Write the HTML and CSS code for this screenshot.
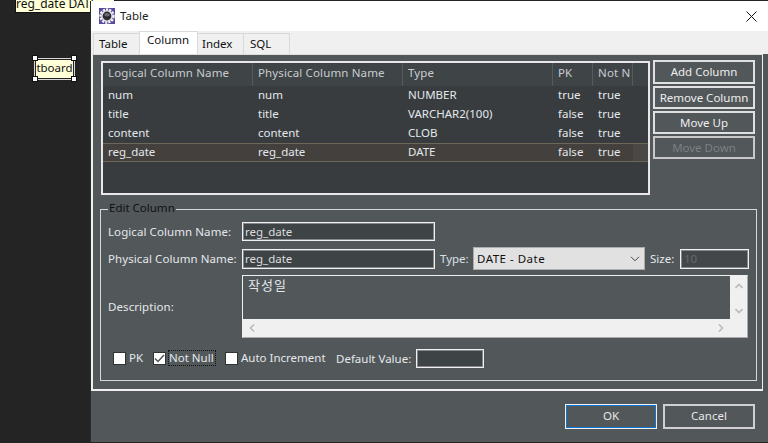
FILE: index.html
```html
<!DOCTYPE html>
<html lang="en">
<head>
<meta charset="utf-8">
<title>Table</title>
<link rel="stylesheet" href="styles.css">
</head>
<body>
<div class="desktop">
  <div class="node node-top">reg_date DATE</div>
  <div class="node node-sel">tboard
    <i class="h h1"></i><i class="h h2"></i><i class="h h3"></i><i class="h h4"></i>
  </div>
  <div class="dialog">
    <header class="titlebar">
      <svg class="appicon" width="16" height="16" viewBox="0 0 16 16">
        <rect width="16" height="16" fill="#5a4a9e"/>
        <circle cx="8" cy="8" r="6.5" fill="none" stroke="#f4f4f4" stroke-width="2.4" stroke-dasharray="2.200 1"/>
        <circle cx="8" cy="8" r="5.800" fill="#e6e6e8"/>
        <circle cx="8" cy="8" r="4.400" fill="#2a2a32"/>
        <ellipse cx="8" cy="6.800" rx="2.800" ry="1.800" fill="#6a6a74"/>
      </svg>
      <span class="title">Table</span>
      <svg class="close" width="11" height="11" viewBox="0 0 11 11"><path d="M.5.5l10 10M10.500.5l-10 10" stroke="#111" stroke-width="1" fill="none"/></svg>
    </header>
    <nav class="tabs">
      <span class="tab t1">Table</span>
      <span class="tab active">Column</span>
      <span class="tab t3">Index</span>
      <span class="tab t4">SQL</span>
    </nav>
    <main class="panel">
      <section class="top">
        <div class="table">
          <div class="row head">
            <span class="c c1">Logical Column Name</span><span class="c c2">Physical Column Name</span><span class="c c3">Type</span><span class="c c4">PK</span><span class="c c5">Not N</span>
          </div>
          <div class="row"><span class="c1">num</span><span class="c2">num</span><span class="c3">NUMBER</span><span class="c4">true</span><span class="c5">true</span></div>
          <div class="row"><span class="c1">title</span><span class="c2">title</span><span class="c3">VARCHAR2(100)</span><span class="c4">false</span><span class="c5">true</span></div>
          <div class="row"><span class="c1">content</span><span class="c2">content</span><span class="c3">CLOB</span><span class="c4">false</span><span class="c5">true</span></div>
          <div class="row sel"><span class="c1">reg_date</span><span class="c2">reg_date</span><span class="c3">DATE</span><span class="c4">false</span><span class="c5">true</span><span class="tail"></span></div>
        </div>
        <div class="btns">
          <button class="btn">Add Column</button>
          <button class="btn">Remove Column</button>
          <button class="btn">Move Up</button>
          <button class="btn off">Move Down</button>
        </div>
      </section>
      <fieldset class="edit">
        <legend>Edit Column</legend>
        <div class="line l1"><label class="lbl">Logical Column Name:</label><span class="inp w191">reg_date</span></div>
        <div class="line l2"><label class="lbl">Physical Column Name:</label><span class="inp w191">reg_date</span>
          <label class="lbl2">Type:</label>
          <span class="select">DATE - Date<svg width="10" height="6" viewBox="0 0 10 6"><path d="M1 .8l4 4 4-4" stroke="#444" fill="none"/></svg></span>
          <label class="lbl3">Size:</label><span class="inp size">10</span>
        </div>
        <div class="line l3"><label class="lbl desc">Description:</label>
          <div class="area">
            <div class="area-main">
              <div class="area-text">작성일</div>
              <div class="vbar">
                <svg width="8" height="6" viewBox="0 0 8 6"><path d="M.5 5l3.500-3.500L7.500 5" stroke="#bbb" stroke-width="1.600" fill="none"/></svg>
                <svg width="8" height="6" viewBox="0 0 8 6"><path d="M.5 1l3.500 3.500L7.500 1" stroke="#bbb" stroke-width="1.600" fill="none"/></svg>
              </div>
            </div>
            <div class="hbar">
              <svg width="6" height="8" viewBox="0 0 6 8"><path d="M5 .5L1.500 4 5 7.500" stroke="#bbb" stroke-width="1.600" fill="none"/></svg>
              <svg width="6" height="8" viewBox="0 0 6 8"><path d="M1 .5L4.500 4 1 7.500" stroke="#bbb" stroke-width="1.600" fill="none"/></svg>
            </div>
          </div>
        </div>
        <div class="line l4">
          <span class="chk"></span><span class="cl pk">PK</span>
          <span class="chk c2b on"><svg width="11" height="9" viewBox="0 0 11 9"><path d="M1 4.500l3 3L10 1" stroke="#555" stroke-width="1.500" fill="none"/></svg></span><span class="cl nn">Not Null</span>
          <span class="chk c2b"></span><span class="cl ai">Auto Increment</span>
          <span class="cl dv">Default Value:</span><span class="inp dflt"></span>
        </div>
      </fieldset>
    </main>
    <footer class="foot">
      <button class="fbtn ok">OK</button>
      <button class="fbtn cancel">Cancel</button>
    </footer>
  </div>
</div>
</body>
</html>
```
FILE: styles.css
```css
* { box-sizing: border-box; }
html, body { margin: 0; padding: 0; }
body { width: 768px; height: 443px; overflow: hidden; background: #242424; font: 11.5px/16px "Noto Sans", "Noto Sans CJK KR", sans-serif; }
.desktop { position: relative; width: 768px; height: 443px; overflow: hidden; }
.node { position: absolute; background: #ffffd8; color: #111; border: 1px solid #111; }
.node-top { left: 15px; top: -5px; width: 100px; height: 18px; white-space: nowrap; font-size: 12px; }
.node-sel { left: 34px; top: 58px; width: 41px; height: 22px; border-color: #d8d8d8; text-align: center; line-height: 18px; font-size: 11.5px; box-shadow: inset 0 0 0 1px #222; }
.h { position: absolute; width: 6px; height: 6px; background: #fff; border: 1px solid #111; }
.h1 { left: -3px; top: -4px; } .h2 { right: -3px; top: -4px; } .h3 { left: -3px; bottom: -3px; } .h4 { right: -3px; bottom: -3px; }
.dialog { position: absolute; left: 90px; top: 1px; width: 678px; height: 441px; background: #52575a; border-left: 1px solid #2c2c2c; display: flex; flex-direction: column; }
.titlebar { height: 30px; flex: none; background: #fff; display: flex; align-items: center; padding: 0 11px 0 8px; color: #222; }
.title { margin-left: 5px; font-size: 11.5px; }
.close { margin-left: auto; }
.tabs { height: 23px; flex: none; background: #f0f0f0; display: flex; align-items: flex-end; padding-left: 2px; color: #111; }
.tab { height: 21px; border: 1px solid #d9d9d9; border-bottom: 0; background: #f0f0f0; padding: 2px 0 0 5px; }
.t1 { width: 47px; } .t3 { width: 47px; margin-left: -1px; padding-left: 4px; } .t4 { width: 47px; margin-left: -1px; padding-left: 6px; }
.tab.active { width: 59px; height: 23px; background: #fff; padding: 0 0 0 7px; margin-left: -1px; position: relative; }
.panel { height: 337px; flex: none; width: 672px; border: 2px solid #f0f0f0; border-top: 1px solid #ddd; border-right: 1px solid #f0f0f0; padding: 6px 0 0 8px; color: #e4e8ec; }
.top { display: flex; gap: 3px; }
.table { width: 549px; height: 134px; border: 2px solid #e8e8e8; background: #383c3f; }
.row { display: flex; height: 19px; line-height: 18px; position: relative; }
.row span { display: block; padding-left: 5px; white-space: nowrap; overflow: hidden; }
.head { height: 23px; line-height: 20px; background: #3f4447; color: #c8ccd0; letter-spacing: .14px; }
.c1, .c2, .c3 { width: 150px; flex: none; }
.c4, .c5 { width: 40px; flex: none; }
.c { border-right: 1px solid #555a5d; }
.sel { background: #43403d; box-shadow: inset 0 1px #6b6858, inset 0 -1px #6b6858; }
.row .tail { width: 17px; background: #4a4846; padding: 0; margin: 1px 0; }
.btns { display: flex; flex-direction: column; gap: 2px; width: 102px; margin-top: -1px; }
.btn { height: 23px; padding: 0; background: #52575a; border: 2px solid #e0e0e0; color: #eee; font: inherit; }
.btn:first-child { height: 24px; }
.btn.off { color: #7b8083; border-color: #c8c8c8; }
.edit { width: 657px; height: 179px; margin: 7px 0 0 -1px; padding: 0 7px; border: 1px solid #d8d8d8; position: relative; }
legend { padding: 0 1px; margin-left: 0; color: #111; line-height: 12px; height: 14px; }
.line { display: flex; align-items: center; position: relative; }
.lbl { width: 134px; flex: none; white-space: nowrap; letter-spacing: .08px; }
.inp { display: block; background: #3e4346; border: 1px solid #f0f0f0; box-shadow: inset 0 0 0 1px #85888a; height: 20px; line-height: 17px; padding-left: 2px; color: #ddd; }
.w191 { width: 193px; }
.l1 { margin-top: 6px; }
.l1 .inp { height: 19px; }
.l2 { margin-top: 6px; }
.lbl2 { margin-left: 5px; width: 33px; color: #d8e0e8; }
.select { width: 172px; height: 23px; background: #e1e1e1; border: 1px solid #adadad; color: #111; padding: 0 4px 0 3px; line-height: 20px; display: flex; justify-content: space-between; align-items: center; letter-spacing: .5px; }
.lbl3 { margin-left: 5px; width: 30px; }
.size { width: 69px; color: #666; background: #43474a; padding-left: 3px; }
.l3 { margin-top: 5px; align-items: stretch; }
.desc { align-self: center; }
.area { width: 506px; height: 63px; border: 1px solid #f0f0f0; border-bottom-color: #aaa; border-right-color: #aaa; background: #f0f0f0; display: flex; flex-direction: column; }
.area-main { flex: 1; display: flex; min-height: 0; }
.area-text { flex: 1; background: #52575a; padding: 1px 0 0 5px; line-height: 16px; font-size: 13px; letter-spacing: 1px; }
.vbar { width: 17px; display: flex; flex-direction: column; justify-content: space-between; align-items: center; padding: 7px 0 5px; }
.hbar { height: 18px; display: flex; justify-content: space-between; align-items: center; padding: 0 23px 0 6px; }
.vbar svg, .hbar svg { display: block; }
.l4 { margin-top: 11px; height: 19px; }
.chk { width: 13px; height: 13px; background: #fff; border: 1px solid #333; flex: none; margin-left: 5px; margin-top: -1px; display: flex; align-items: center; justify-content: center; }
.c2b { margin-left: 10px; }
.cl { margin-left: 3px; white-space: nowrap; }
.pk, .nn, .ai { line-height: 14px; margin-top: -2px; }
.pk { width: 14px; }
.nn { width: 46px; outline: 1px dotted #111; outline-offset: 0; }
.ai { width: 84px; }
.dv { margin-left: 11px; width: 75px; }
.dflt { width: 68px; margin-left: 5px; height: 19px; }
.foot { flex: 1; display: flex; justify-content: flex-end; gap: 6px; padding: 13px 13px 0 0; }
.fbtn { width: 92px; height: 25px; padding: 0 0 1px; background: #52575a; border: 2px solid #d0d0d0; color: #e8e8e8; font: inherit; }
.fbtn.ok { border: 1px solid #f0f0f0; box-shadow: inset 0 0 0 1px #0a78d4; }
```
